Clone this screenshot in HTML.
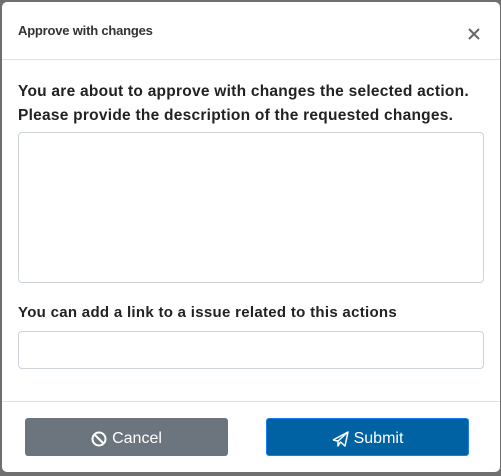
<!DOCTYPE html>
<html><head><style>
body{margin:0;width:501px;height:476px;background:#6f6f6f;position:relative;overflow:hidden;font-family:"Liberation Sans",sans-serif}
.m{position:absolute;left:2px;top:2px;width:498px;height:470px;background:#fff;border-radius:5px}
.t{position:absolute;left:16px;top:21px;font-size:13px;font-weight:bold;color:#333;letter-spacing:-0.2px}
.x{position:absolute;left:466px;top:26px}
.hl{position:absolute;left:0;right:0;top:57px;border-top:1px solid #dee2e6}
.p{position:absolute;left:16px;top:78px;font-size:15.5px;color:#222;line-height:24px;letter-spacing:0.25px;font-weight:bold}
.ta{position:absolute;left:16px;top:130px;width:464px;height:149px;border:1px solid #ced4da;border-radius:4px}
.l{position:absolute;left:16px;top:302px;font-size:15px;color:#222;font-weight:bold;letter-spacing:0.3px}
.in{position:absolute;left:16px;top:329px;width:464px;height:36px;border:1px solid #ced4da;border-radius:4px}
.fl{position:absolute;left:0;right:0;top:399px;border-top:1px solid #dee2e6}
.b{position:absolute;top:416px;height:38px;width:203px;border-radius:3px;color:#fff;font-size:16px;display:flex;align-items:center;justify-content:center;gap:5px;box-sizing:border-box;padding-top:3px}
.c{left:23px;background:#6c757d}
.s{left:264px;background:#0062a3;border:1px solid #1a7ef0}
</style></head><body>
<div class="m">
<div class="t">Approve with changes</div>
<svg class="x" width="12" height="12" viewBox="0 0 12 12"><path d="M1 1L11 11M11 1L1 11" stroke="#666" stroke-width="2"/></svg>
<div class="hl"></div>
<div class="p">You are about to approve with changes the selected action.<br>Please provide the description of the requested changes.</div>
<div class="ta"></div>
<div class="l">You can add a link to a issue related to this actions</div>
<div class="in"></div>
<div class="fl"></div>
<div class="b c"><svg width="16" height="16" viewBox="0 0 16 16"><circle cx="8" cy="8" r="6.5" fill="none" stroke="#fff" stroke-width="2"/><path d="M3.5 3.5L12.5 12.5" stroke="#fff" stroke-width="2"/></svg>Cancel</div>
<div class="b s"><svg width="17" height="16" viewBox="0 0 17 16"><path d="M1 9L16 1L13 15L8.5 11L6 15L6 10L16 1M6 10L1 9" fill="none" stroke="#fff" stroke-width="1.5" stroke-linejoin="round"/></svg>Submit</div>
</div>
</body></html>
